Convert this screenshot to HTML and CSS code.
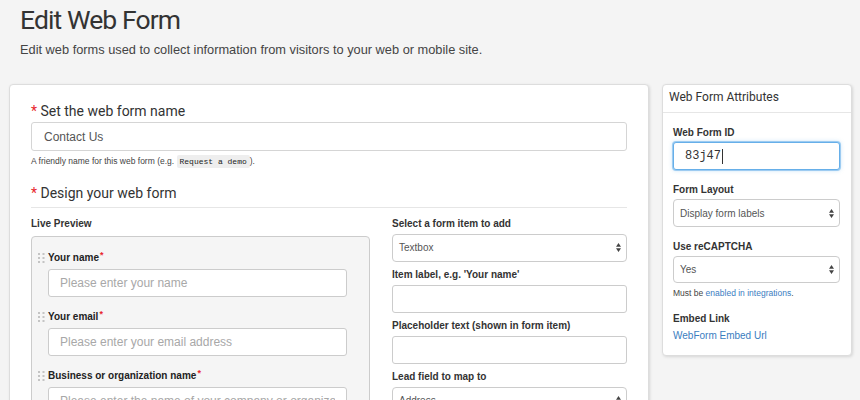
FILE: index.html
```html
<!DOCTYPE html>
<html lang="en">
<head>
<meta charset="utf-8">
<title>Edit Web Form</title>
<link rel="stylesheet" href="styles.css">
</head>
<body>
<header class="page-head">
  <h1 class="page-title">Edit Web Form</h1>
  <p class="page-sub">Edit web forms used to collect information from visitors to your web or mobile site.</p>
</header>
<main class="layout">
  <section class="card main-card">
    <h2 class="sec-title"><span class="req">*</span> Set the web form name</h2>
    <input class="field" type="text" value="Contact Us">
    <p class="help">A friendly name for this web form (e.g. <code class="code">Request a demo</code>).</p>
    <h2 class="sec-title sec-title--rule"><span class="req">*</span> Design your web form</h2>
    <div class="designer">
      <div class="preview-col">
        <div class="lbl lbl--preview">Live Preview</div>
        <div class="preview">
          <div class="pitem">
            <span class="handle"><svg width="7" height="10" viewBox="0 0 7 10"><g fill="#c4c4c4"><rect x="0" y="0" width="2" height="2"/><rect x="4.5" y="0" width="2" height="2"/><rect x="0" y="4" width="2" height="2"/><rect x="4.5" y="4" width="2" height="2"/><rect x="0" y="8" width="2" height="2"/><rect x="4.5" y="8" width="2" height="2"/></g></svg></span>
            <div class="pbody">
              <label class="plbl">Your name<span class="sreq">*</span></label>
              <input class="pinput" type="text" placeholder="Please enter your name">
            </div>
          </div>
          <div class="pitem">
            <span class="handle"><svg width="7" height="10" viewBox="0 0 7 10"><g fill="#c4c4c4"><rect x="0" y="0" width="2" height="2"/><rect x="4.5" y="0" width="2" height="2"/><rect x="0" y="4" width="2" height="2"/><rect x="4.5" y="4" width="2" height="2"/><rect x="0" y="8" width="2" height="2"/><rect x="4.5" y="8" width="2" height="2"/></g></svg></span>
            <div class="pbody">
              <label class="plbl">Your email<span class="sreq">*</span></label>
              <input class="pinput" type="text" placeholder="Please enter your email address">
            </div>
          </div>
          <div class="pitem">
            <span class="handle"><svg width="7" height="10" viewBox="0 0 7 10"><g fill="#c4c4c4"><rect x="0" y="0" width="2" height="2"/><rect x="4.5" y="0" width="2" height="2"/><rect x="0" y="4" width="2" height="2"/><rect x="4.5" y="4" width="2" height="2"/><rect x="0" y="8" width="2" height="2"/><rect x="4.5" y="8" width="2" height="2"/></g></svg></span>
            <div class="pbody">
              <label class="plbl">Business or organization name<span class="sreq">*</span></label>
              <input class="pinput" type="text" placeholder="Please enter the name of your company or organization">
            </div>
          </div>
        </div>
      </div>
      <div class="editor-col">
        <div class="group">
          <label class="lbl">Select a form item to add</label>
          <div class="select"><span>Textbox</span><svg class="arrows" width="5" height="9" viewBox="0 0 5 9"><path d="M0 3.8 L2.5 0 L5 3.8Z M0 5.2 L2.5 9 L5 5.2Z" fill="#444"/></svg></div>
        </div>
        <div class="group">
          <label class="lbl">Item label, e.g. 'Your name'</label>
          <input class="tinput" type="text">
        </div>
        <div class="group">
          <label class="lbl">Placeholder text (shown in form item)</label>
          <input class="tinput" type="text">
        </div>
        <div class="group">
          <label class="lbl">Lead field to map to</label>
          <div class="select"><span>Address</span><svg class="arrows" width="5" height="9" viewBox="0 0 5 9"><path d="M0 3.8 L2.5 0 L5 3.8Z M0 5.2 L2.5 9 L5 5.2Z" fill="#444"/></svg></div>
        </div>
      </div>
    </div>
  </section>
  <aside class="card side-card">
    <div class="side-head">Web Form Attributes</div>
    <div class="side-body">
      <div class="sgroup">
        <label class="slbl">Web Form ID</label>
        <div class="focus-input"><span>83j47</span><span class="caret"></span></div>
      </div>
      <div class="sgroup">
        <label class="slbl">Form Layout</label>
        <div class="select"><span>Display form labels</span><svg class="arrows" width="5" height="9" viewBox="0 0 5 9"><path d="M0 3.8 L2.5 0 L5 3.8Z M0 5.2 L2.5 9 L5 5.2Z" fill="#444"/></svg></div>
      </div>
      <div class="sgroup sgroup--tight">
        <label class="slbl">Use reCAPTCHA</label>
        <div class="select select--short"><span>Yes</span><svg class="arrows" width="5" height="9" viewBox="0 0 5 9"><path d="M0 3.8 L2.5 0 L5 3.8Z M0 5.2 L2.5 9 L5 5.2Z" fill="#444"/></svg></div>
        <p class="shelp">Must be <a class="link" href="#">enabled in integrations</a>.</p>
      </div>
      <div class="sgroup sgroup--last">
        <label class="slbl">Embed Link</label>
        <a class="link link--embed" href="#">WebForm Embed Url</a>
      </div>
    </div>
  </aside>
</main>
</body>
</html>
```

FILE: styles.css
```css
html, body {
  overflow: hidden;
}

body {
  margin: 0;
  background: #f4f4f4;
  font-family: "Liberation Sans", Arial, sans-serif;
  color: #333;
}

.page-head {
  padding: 5px 20px 0;
}

.page-title {
  margin: 0;
  font: 400 26.5px/30px Roboto, sans-serif;
  letter-spacing: -0.9px;
  color: #333;
}

.page-sub {
  margin: 6.5px 0 0;
  font-size: 12.8px;
  line-height: 15px;
  color: #444;
}

.layout {
  display: flex;
  align-items: flex-start;
  gap: 13px;
  padding: 0 8px 0 9px;
  margin-top: 27.5px;
}

.card {
  background: #fff;
  border: 1px solid #ddd;
  border-radius: 4px;
  box-shadow: 1px 1px 3px rgba(0, 0, 0, 0.12);
  box-sizing: border-box;
}

.main-card {
  width: 640px;
  flex: none;
  padding: 17px 21px 30px;
}

.side-card {
  width: 190px;
  flex: none;
}

.sec-title {
  margin: 0;
  font: 400 14px/18px Roboto, sans-serif;
  color: #333;
}

.req {
  color: #e8262d;
}

.field {
  display: block;
  width: 100%;
  box-sizing: border-box;
  height: 29px;
  margin: 2px 0 0;
  border: 1px solid #d5d5d5;
  border-radius: 3px;
  padding: 0 12px;
  font: 12px "Liberation Sans", Arial, sans-serif;
  color: #555;
  background: #fff;
}

.help {
  margin: 4px 0 0;
  font-size: 8.5px;
  line-height: 12px;
  color: #444;
}

.code {
  font: 8px/1 "Liberation Mono", monospace;
  background: #eee;
  color: #222;
  padding: 2px 3px;
  border-radius: 2px;
}

.sec-title--rule {
  margin-top: 16.5px;
  padding-bottom: 5px;
  border-bottom: 1px solid #e6e6e6;
}

.designer {
  display: grid;
  grid-template-columns: 339px 1fr;
  column-gap: 22px;
  margin-top: 10px;
}

.lbl {
  display: block;
  font-weight: bold;
  font-size: 10px;
  line-height: 12px;
  margin-bottom: 4px;
  color: #333;
}

.lbl--preview {
  margin-bottom: 6px;
}

.preview {
  background: #f5f5f5;
  border: 1px solid #ccc;
  border-radius: 4px;
  padding: 15px 22px 4px 6px;
}

.pitem {
  display: flex;
  margin-bottom: 14px;
}

.handle {
  width: 10px;
  flex: none;
  padding-top: 1.5px;
  line-height: 0;
}

.pbody {
  flex: 1;
  min-width: 0;
}

.plbl {
  display: block;
  font-weight: bold;
  font-size: 10px;
  line-height: 12px;
  margin-bottom: 5px;
  color: #222;
}

.sreq {
  color: #e8262d;
  font-size: 9px;
  position: relative;
  top: -3px;
  margin-left: 1px;
}

.pinput,
.tinput {
  display: block;
  width: 100%;
  box-sizing: border-box;
  height: 28px;
  margin: 0;
  border: 1px solid #ccc;
  border-radius: 3px;
  padding: 0 11px;
  font: 12px "Liberation Sans", Arial, sans-serif;
  color: #555;
  background: #fff;
}

.pinput::placeholder {
  color: #a8a8a8;
}

.group {
  margin-bottom: 7px;
}

.select {
  height: 28px;
  box-sizing: border-box;
  border: 1px solid #ccc;
  border-radius: 4px;
  background: #fff;
  display: flex;
  align-items: center;
  justify-content: space-between;
  padding: 0 5px 0 6px;
  font-size: 10px;
  color: #555;
}

.select--short {
  height: 27px;
}

.side-head {
  font: 400 12px/14px Roboto, sans-serif;
  color: #333;
  padding: 5px 6px 8px;
  border-bottom: 1px solid #e6e6e6;
}

.side-body {
  padding: 14px 11px 13px 10px;
}

.sgroup {
  margin-bottom: 14px;
}

.sgroup--tight {
  margin-bottom: 13.5px;
}

.sgroup--last {
  margin-bottom: 0;
}

.slbl {
  display: block;
  font-weight: bold;
  font-size: 10px;
  line-height: 12px;
  margin-bottom: 3px;
  color: #333;
}

.focus-input {
  height: 28px;
  box-sizing: border-box;
  border: 1px solid #66afe9;
  border-radius: 3px;
  box-shadow: 0 0 0 1px rgba(102, 175, 233, 0.55), 0 0 4px rgba(102, 175, 233, 0.5);
  display: flex;
  align-items: center;
  padding: 0 11px;
  font: 12px "Liberation Mono", monospace;
  color: #333;
  background: #fff;
}

.caret {
  display: inline-block;
  width: 1px;
  height: 15px;
  background: #333;
  margin-left: 1px;
}

.shelp {
  margin: 5px 0 0;
  font-size: 8.5px;
  line-height: 11px;
  color: #444;
}

.link {
  color: #3a7dbf;
  text-decoration: none;
}

.link--embed {
  display: block;
  font-size: 10px;
  line-height: 12px;
  margin-top: 5px;
}
```
